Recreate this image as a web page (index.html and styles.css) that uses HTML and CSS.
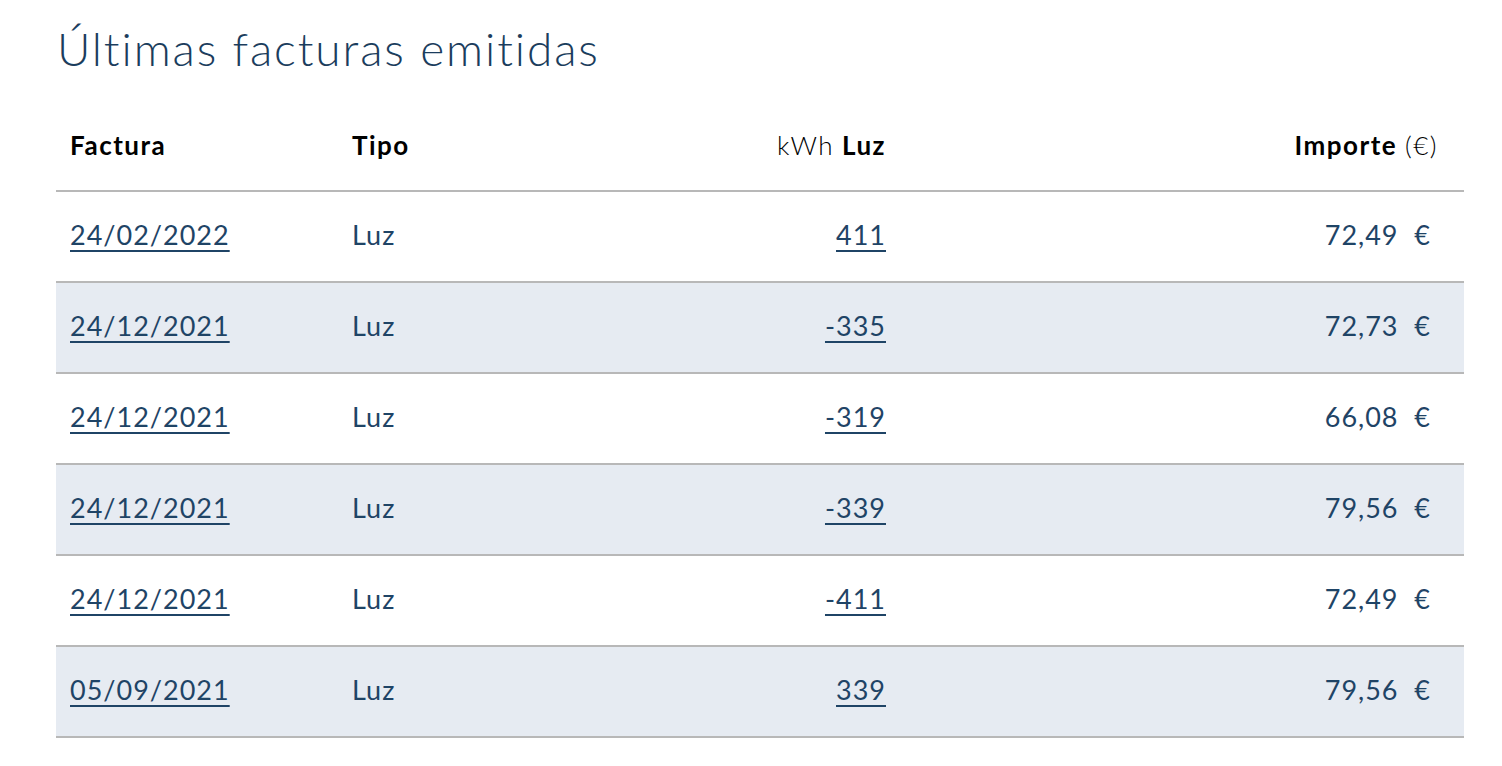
FILE: index.html
```html
<!DOCTYPE html>
<html lang="es">
<head>
<meta charset="utf-8">
<link rel="stylesheet" href="styles.css">
</head>
<body>
<main class="page">
  <h1 class="title">Últimas facturas emitidas</h1>
  <table class="bills">
    <colgroup>
      <col class="c-fact"><col class="c-tipo"><col class="c-kwh"><col class="c-imp">
    </colgroup>
    <thead>
      <tr>
        <th class="left">Factura</th>
        <th class="left">Tipo</th>
        <th class="right"><span class="light">kWh</span> Luz</th>
        <th class="right imp-h">Importe <span class="light">(€)</span></th>
      </tr>
    </thead>
    <tbody>
      <tr><td><a href="#">24/02/2022</a></td><td>Luz</td><td class="right"><a href="#">411</a></td><td class="right amt">72,49&nbsp; €</td></tr>
      <tr class="alt"><td><a href="#">24/12/2021</a></td><td>Luz</td><td class="right"><a href="#">-335</a></td><td class="right amt">72,73&nbsp; €</td></tr>
      <tr><td><a href="#">24/12/2021</a></td><td>Luz</td><td class="right"><a href="#">-319</a></td><td class="right amt">66,08&nbsp; €</td></tr>
      <tr class="alt"><td><a href="#">24/12/2021</a></td><td>Luz</td><td class="right"><a href="#">-339</a></td><td class="right amt">79,56&nbsp; €</td></tr>
      <tr><td><a href="#">24/12/2021</a></td><td>Luz</td><td class="right"><a href="#">-411</a></td><td class="right amt">72,49&nbsp; €</td></tr>
      <tr class="alt"><td><a href="#">05/09/2021</a></td><td>Luz</td><td class="right"><a href="#">339</a></td><td class="right amt">79,56&nbsp; €</td></tr>
    </tbody>
  </table>
</main>
</body>
</html>
```

FILE: styles.css
```css
html, body {
  margin: 0;
  padding: 0;
  background: #ffffff;
}
body {
  font-family: Lato, "Open Sans", sans-serif;
  color: #1f4466;
}
.page {
  padding: 0 38px 0 56px;
}
.title {
  margin: 0;
  padding: 21px 0 0 1px;
  height: 79px;
  font-size: 46px;
  font-weight: 300;
  letter-spacing: 1.9px;
  line-height: 56px;
  color: #1b3d5d;
}
.bills {
  width: 1408px;
  border-collapse: collapse;
  table-layout: fixed;
  font-size: 27px;
  letter-spacing: 1px;
}
.c-fact { width: 282px; }
.c-tipo { width: 282px; }
.c-kwh { width: 280px; }
.c-imp { width: 564px; }
.bills th, .bills td {
  height: 91px;
  padding: 0 14px;
  vertical-align: middle;
  box-sizing: border-box;
}
.bills th {
  color: #000000;
  font-weight: 700;
  font-size: 26px;
  letter-spacing: 1.5px;
  border-bottom: 2px solid #b8b8b8;
}
.bills td {
  border-bottom: 2px solid #b8b8b8;
  color: #1f4466;
  font-weight: 400;
  padding-bottom: 4px;
}
.bills .left { text-align: left; }
.bills .right { text-align: right; }
.light { font-weight: 300; }
.bills .imp-h { padding-right: 26px; }
.bills .amt { padding-right: 33px; }
.alt td { background: #e6ebf2; }
.bills a {
  color: #1f4466;
  text-decoration: underline;
  text-underline-offset: 5px;
  text-decoration-thickness: 2px;
}
```
